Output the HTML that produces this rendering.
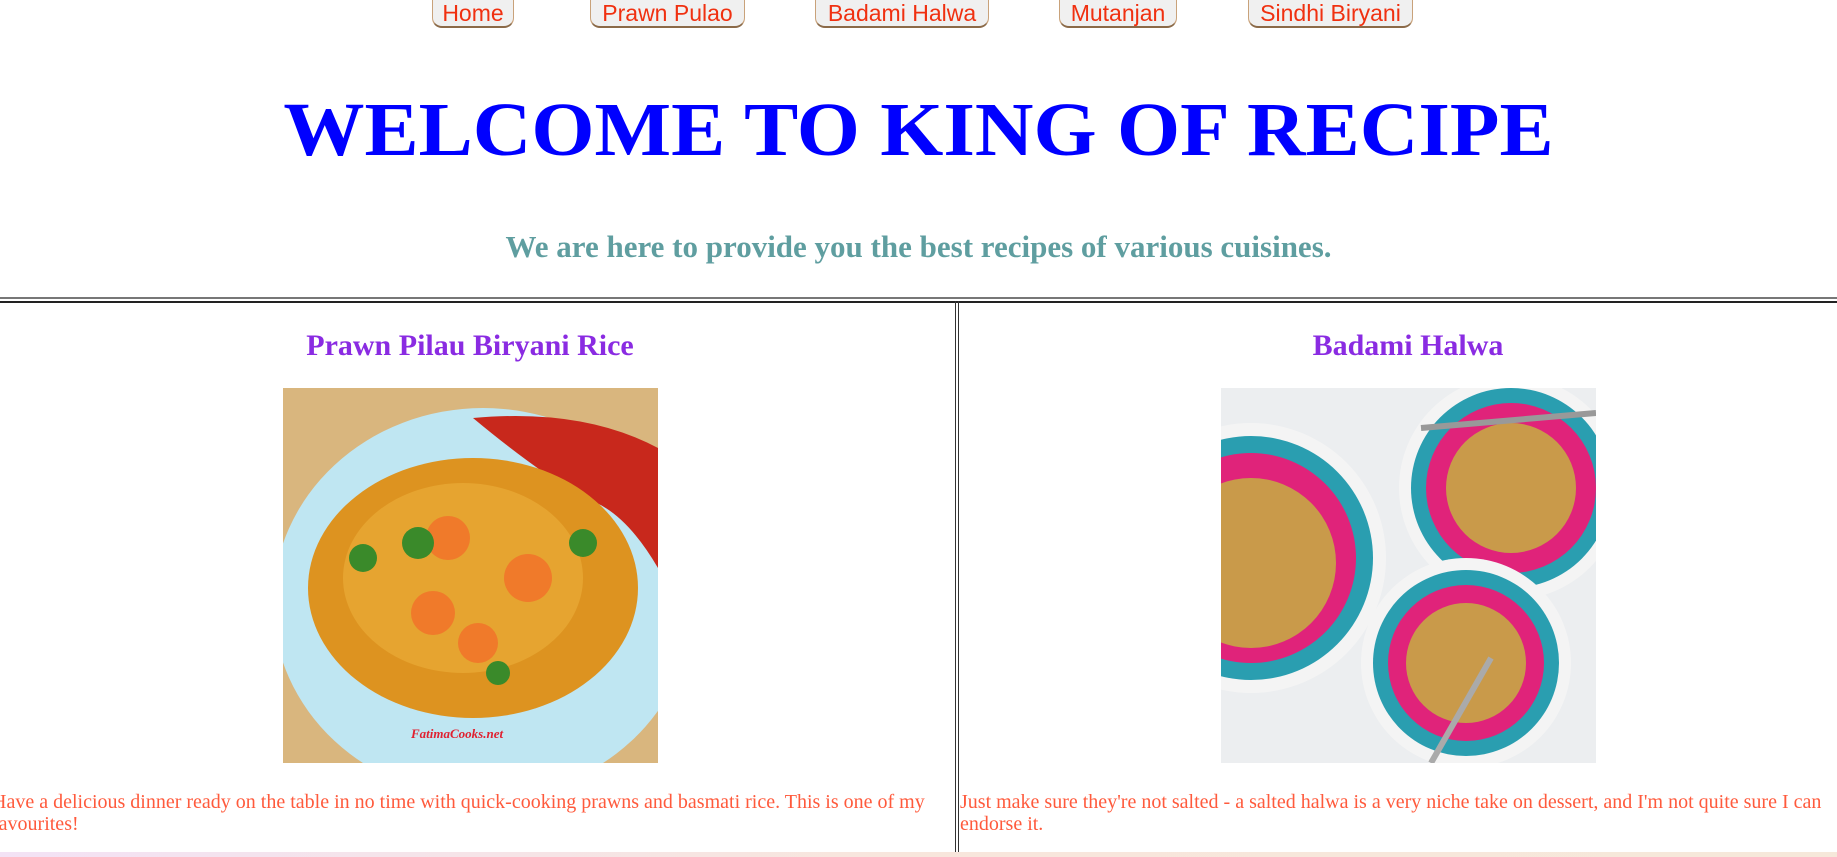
<!DOCTYPE html>
<html><head><meta charset="utf-8"><style>
*{margin:0;padding:0;box-sizing:border-box}
html,body{width:1837px;height:857px;overflow:hidden;background:#fff;font-family:"Liberation Serif",serif;position:relative}
.btn{position:absolute;top:-6px;height:34px;background:#f0f0f0;border:1px solid #c9a27a;border-bottom:2px solid #8b6a48;border-radius:0 0 10px 10px;color:#f03010;font-family:"Liberation Sans",sans-serif;font-size:23px;text-align:center;line-height:36px}
h1{position:absolute;left:0;width:1837px;top:85px;text-align:center;color:#0000ff;font-size:76px;font-weight:bold;line-height:90px;white-space:nowrap;transform:scaleX(1.068)}
.sub{position:absolute;left:0;width:1837px;top:229px;text-align:center;color:#5f9ea0;font-size:31px;font-weight:bold;line-height:36px}
.hr{position:absolute;left:0;width:1837px;height:2px;background:#777;top:297px}
.tb{position:absolute;left:0;width:1837px;height:2px;background:#222;top:301px}
.vl{position:absolute;top:301px;height:555px;width:1px;background:#333}
h2{position:absolute;top:326px;color:#8a2be2;font-size:30px;font-weight:bold;text-align:center;line-height:40px}
.p{position:absolute;top:791px;color:#ff5a3c;font-size:20px;line-height:22px}
.img{position:absolute;top:388px;width:375px;height:375px;overflow:hidden}
.bot{position:absolute;left:0;top:852px;width:1837px;height:5px;background:linear-gradient(90deg,#f3e2f5,#f8e6dc,#f6e8da)}
</style></head><body>
<div class="btn" style="left:432px;width:82px">Home</div>
<div class="btn" style="left:590px;width:155px">Prawn Pulao</div>
<div class="btn" style="left:815px;width:174px">Badami Halwa</div>
<div class="btn" style="left:1059px;width:118px">Mutanjan</div>
<div class="btn" style="left:1248px;width:165px">Sindhi Biryani</div>
<h1>WELCOME TO KING OF RECIPE</h1>
<div class="sub">We are here to provide you the best recipes of various cuisines.</div>
<div class="hr"></div>
<div class="tb"></div>
<div class="vl" style="left:955px"></div>
<div class="vl" style="left:958px"></div>
<h2 style="left:0;width:940px">Prawn Pilau Biryani Rice</h2>
<h2 style="left:958px;width:900px">Badami Halwa</h2>
<div class="img" style="left:283px;background:#d8b27a">
<svg width="375" height="375" viewBox="0 0 375 375">
<rect width="375" height="375" fill="#d9b67e"/>
<ellipse cx="200" cy="215" rx="210" ry="195" fill="#bfe6f2"/>
<path d="M190 30 Q300 20 375 60 L375 180 Q340 120 300 110 Q250 80 190 30Z" fill="#c8281c"/>
<ellipse cx="190" cy="200" rx="165" ry="130" fill="#dd9320"/>
<ellipse cx="180" cy="190" rx="120" ry="95" fill="#e6a430"/>
<circle cx="165" cy="150" r="22" fill="#f07a2a"/><circle cx="245" cy="190" r="24" fill="#f07a2a"/>
<circle cx="150" cy="225" r="22" fill="#f07a2a"/><circle cx="195" cy="255" r="20" fill="#f07a2a"/>
<circle cx="80" cy="170" r="14" fill="#3a8a2a"/><circle cx="135" cy="155" r="16" fill="#3a8a2a"/>
<circle cx="300" cy="155" r="14" fill="#3a8a2a"/><circle cx="215" cy="285" r="12" fill="#3a8a2a"/>
<text x="128" y="350" font-family="Liberation Serif" font-style="italic" font-weight="bold" font-size="13" fill="#e02030">FatimaCooks.net</text>
</svg></div>
<div class="img" style="left:1221px;background:#eef0f2">
<svg width="375" height="375" viewBox="0 0 375 375">
<rect width="375" height="375" fill="#eceef0"/>
<circle cx="290" cy="100" r="112" fill="#f4f4f4"/><circle cx="290" cy="100" r="100" fill="#2a9eb0"/><circle cx="290" cy="100" r="85" fill="#e0237a"/><circle cx="290" cy="100" r="65" fill="#c99a4a"/>
<circle cx="30" cy="170" r="135" fill="#f4f4f4"/><circle cx="30" cy="170" r="122" fill="#2a9eb0"/><circle cx="30" cy="170" r="105" fill="#e0237a"/><circle cx="30" cy="175" r="85" fill="#c99a4a"/>
<circle cx="245" cy="275" r="105" fill="#f4f4f4"/><circle cx="245" cy="275" r="93" fill="#2a9eb0"/><circle cx="245" cy="275" r="78" fill="#e0237a"/><circle cx="245" cy="275" r="60" fill="#c99a4a"/>
<line x1="210" y1="375" x2="270" y2="270" stroke="#aaa" stroke-width="6"/>
<line x1="200" y1="40" x2="375" y2="25" stroke="#999" stroke-width="6"/>
</svg></div>
<div class="p" style="left:-8px;width:935px">Have a delicious dinner ready on the table in no time with quick-cooking prawns and basmati rice. This is one of my favourites!</div>
<div class="p" style="left:960px;width:870px">Just make sure they're not salted - a salted halwa is a very niche take on dessert, and I'm not quite sure I can endorse it.</div>
<div class="bot"></div>
</body></html>
